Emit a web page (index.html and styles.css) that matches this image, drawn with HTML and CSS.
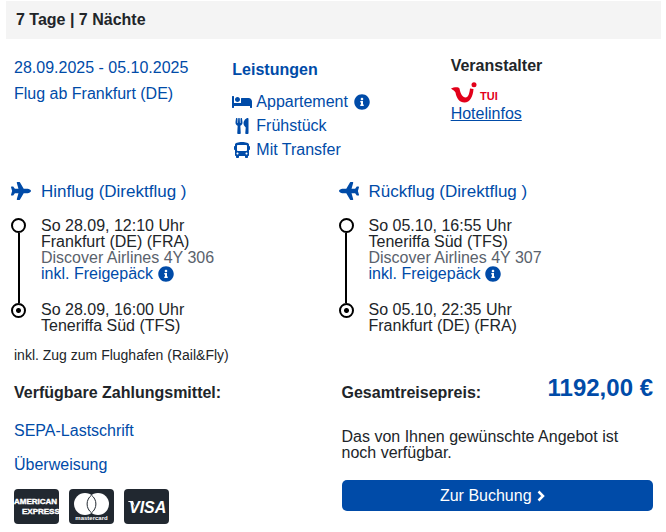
FILE: index.html
```html
<!DOCTYPE html>
<html lang="de">
<head>
    <meta charset="UTF-8">
    <meta name="viewport" content="width=device-width, initial-scale=1.0">
    <title>Reiseangebot</title>
    <link rel="stylesheet" href="styles.css">
</head>
<body>

<!-- icons -->
<svg class="sprite" aria-hidden="true">
    <symbol id="info" viewBox="0 0 512 512"><path d="M256 8C119.043 8 8 119.083 8 256c0 136.997 111.043 248 248 248s248-111.003 248-248C504 119.083 392.957 8 256 8zm0 110c23.196 0 42 18.804 42 42s-18.804 42-42 42-42-18.804-42-42 18.804-42 42-42zm56 254c0 6.627-5.373 12-12 12h-88c-6.627 0-12-5.373-12-12v-24c0-6.627 5.373-12 12-12h12v-64h-12c-6.627 0-12-5.373-12-12v-24c0-6.627 5.373-12 12-12h64c6.627 0 12 5.373 12 12v100h12c6.627 0 12 5.373 12 12v24z"/></symbol>
    <symbol id="bed" viewBox="0 0 640 512"><path d="M176 256c44.11 0 80-35.89 80-80s-35.89-80-80-80-80 35.89-80 80 35.89 80 80 80zm352-128H304c-8.84 0-16 7.16-16 16v144H64V80c0-8.84-7.16-16-16-16H16C7.16 64 0 71.16 0 80v352c0 8.84 7.16 16 16 16h32c8.84 0 16-7.16 16-16v-48h512v48c0 8.84 7.16 16 16 16h32c8.84 0 16-7.16 16-16V240c0-61.86-50.14-112-112-112z"/></symbol>
    <symbol id="utensils" viewBox="0 0 416 512"><path d="M207.9 15.2c.8 4.7 16.1 94.5 16.1 128.8 0 52.3-27.8 89.6-68.9 104.6L168 486.7c.7 13.7-10.2 25.3-24 25.3H80c-13.7 0-24.7-11.5-24-25.3l12.9-238.1C27.7 233.6 0 196.2 0 144 0 109.6 15.3 19.9 16.1 15.2 19.3-5.1 61.4-5.4 64 16.3v141.2c1.3 3.4 15.1 3.2 16 0 1.4-25.3 7.9-139.2 8-141.8 3.3-20.8 44.7-20.8 47.9 0 .2 2.7 6.6 116.5 8 141.8.9 3.2 14.8 3.4 16 0V16.3c2.6-21.6 44.8-21.4 47.9-1.1zm119.2 285.7l-15 185.1c-1.2 14 9.9 26 23.9 26h56c13.3 0 24-10.7 24-24V24c0-13.2-10.7-24-24-24-82.5 0-221.4 178.5-64.9 300.9z"/></symbol>
    <symbol id="bus" viewBox="0 0 512 512"><path d="M488 128h-8V80c0-44.8-99.2-80-224-80S32 35.2 32 80v48h-8c-13.25 0-24 10.74-24 24v80c0 13.25 10.75 24 24 24h8v160c0 17.67 14.33 32 32 32v32c0 17.67 14.33 32 32 32h32c17.67 0 32-14.33 32-32v-32h192v32c0 17.67 14.33 32 32 32h32c17.67 0 32-14.33 32-32v-32h6.4c16 0 25.6-12.8 25.6-25.6V256h8c13.25 0 24-10.75 24-24v-80c0-13.26-10.75-24-24-24zM112 400c-17.67 0-32-14.33-32-32s14.33-32 32-32 32 14.33 32 32-14.33 32-32 32zm16-112c-17.67 0-32-14.33-32-32V128c0-17.67 14.33-32 32-32h256c17.67 0 32 14.33 32 32v128c0 17.67-14.33 32-32 32H128zm272 112c-17.67 0-32-14.33-32-32s14.33-32 32-32 32 14.33 32 32-14.33 32-32 32z"/></symbol>
    <symbol id="plane" viewBox="0 0 576 512"><path d="M480 192H365.71L260.61 8.06A16.014 16.014 0 0 0 246.71 0h-65.5c-10.63 0-18.3 10.17-15.38 20.39L214.86 192H112l-43.2-57.6c-3.02-4.03-7.77-6.4-12.8-6.4H16.01C5.6 128-2.04 137.78.49 147.88L32 256 .49 364.12C-2.04 374.22 5.6 384 16.01 384H56c5.04 0 9.78-2.37 12.8-6.4L112 320h102.86l-49.03 171.6c-2.92 10.22 4.75 20.4 15.38 20.4h65.5c5.74 0 11.04-3.08 13.89-8.06L365.71 320H480c35.35 0 96-28.65 96-64s-60.65-64-96-64z"/></symbol>
</svg>

<main class="offer">
    <h1 class="offerHeader">7 Tage | 7 Nächte</h1>

    <section class="summary">
        <div class="travelDates">
            <div>28.09.2025 - 05.10.2025</div>
            <div>Flug ab Frankfurt (DE)</div>
        </div>
        <div class="services">
            <h2>Leistungen</h2>
            <ul>
                <li><svg class="icon"><use href="#bed"/></svg>Appartement
                    <button class="infoButton" type="button" aria-label="Info"><svg><use href="#info"/></svg></button></li>
                <li><svg class="icon"><use href="#utensils"/></svg>Frühstück</li>
                <li><svg class="icon"><use href="#bus"/></svg>Mit Transfer</li>
            </ul>
        </div>
        <div class="operator">
            <h2>Veranstalter</h2>
            <svg class="tuiLogo" viewBox="0 0 50 22">
                <path d="M0 6.500C3 5 7.500 4.500 8.500 6.500C9.500 12 11.500 15.500 14.500 15.500C17.500 15.500 18.500 11 19 6.500L22.500 7C22 14.500 19 20.500 13.500 20.500C8.500 20.500 5.500 16.500 4.500 10.500C3.500 8.500 1.500 8 0 6.500Z"/>
                <circle cx="23" cy="2.700" r="2.500"/>
                <text x="29" y="18">TUI</text>
            </svg>
            <a href="#">Hotelinfos</a>
        </div>
    </section>

    <section class="flights">
        <div class="flight">
            <svg class="plane"><use href="#plane"/></svg>
            <h3>Hinflug (Direktflug )</h3>
            <div class="route">
                <span class="stop"></span>
                <span class="line"></span>
                <span class="stop final"></span>
            </div>
            <div class="stops">
                <div>
                    <div>So 28.09, 12:10 Uhr</div>
                    <div>Frankfurt (DE) (FRA)</div>
                    <div class="airline">Discover Airlines 4Y 306</div>
                    <div class="baggage">inkl. Freigepäck <button class="infoButton" type="button" aria-label="Info"><svg><use href="#info"/></svg></button></div>
                </div>
                <div>
                    <div>So 28.09, 16:00 Uhr</div>
                    <div>Teneriffa Süd (TFS)</div>
                </div>
            </div>
        </div>
        <div class="flight">
            <svg class="plane back"><use href="#plane"/></svg>
            <h3>Rückflug (Direktflug )</h3>
            <div class="route">
                <span class="stop"></span>
                <span class="line"></span>
                <span class="stop final"></span>
            </div>
            <div class="stops">
                <div>
                    <div>So 05.10, 16:55 Uhr</div>
                    <div>Teneriffa Süd (TFS)</div>
                    <div class="airline">Discover Airlines 4Y 307</div>
                    <div class="baggage">inkl. Freigepäck <button class="infoButton" type="button" aria-label="Info"><svg><use href="#info"/></svg></button></div>
                </div>
                <div>
                    <div>So 05.10, 22:35 Uhr</div>
                    <div>Frankfurt (DE) (FRA)</div>
                </div>
            </div>
        </div>
    </section>

    <p class="railNote">inkl. Zug zum Flughafen (Rail&amp;Fly)</p>

    <section class="checkout">
        <div class="payment">
            <h4>Verfügbare Zahlungsmittel:</h4>
            <ul>
                <li>SEPA-Lastschrift</li>
                <li>Überweisung</li>
            </ul>
            <div class="cards">
                <svg viewBox="0 0 45 35" role="img" aria-label="American Express">
                    <rect width="45" height="35" rx="4"/>
                    <text class="amex" x="0" y="15">AMERICAN</text>
                    <text class="amex" x="8" y="25">EXPRESS</text>
                </svg>
                <svg viewBox="0 0 45 35" role="img" aria-label="Mastercard">
                    <rect width="45" height="35" rx="4"/>
                    <circle class="disc" cx="16" cy="15" r="11"/>
                    <circle class="disc" cx="29" cy="15" r="11"/>
                    <path class="overlap" d="M22.500 6.200a11 11 0 0 1 0 17.600a11 11 0 0 1 0-17.600z"/>
                    <text class="mastercard" x="22.500" y="31">mastercard</text>
                </svg>
                <svg viewBox="0 0 45 35" role="img" aria-label="Visa">
                    <rect width="45" height="35" rx="4"/>
                    <path class="flag" d="M4 12h5l2 6c-1-3-4-5-7-5.500z"/>
                    <text class="visa" x="5" y="24">VISA</text>
                </svg>
            </div>
        </div>
        <div class="booking">
            <div class="total">
                <h4>Gesamtreisepreis:</h4>
                <strong class="price">1192,00 €</strong>
            </div>
            <p>Das von Ihnen gewünschte Angebot ist noch verfügbar.</p>
            <button class="bookButton" type="button">Zur Buchung
                <svg viewBox="0 0 8 12"><path d="M1.500 1.500L6 6L1.500 10.500"/></svg>
            </button>
        </div>
    </section>
</main>

</body>
</html>
```
FILE: styles.css
```css
body {
    font-family: "Liberation Sans", Arial, sans-serif;
    font-size: 16px;
    line-height: 16px;
    background-color: #fff;
    color: #212529;
    margin: 0;
}

h1, h2, h3, h4, p, ul {
    margin: 0;
    padding: 0;
    font-size: 16px;
}

ul {
    list-style-type: none;
}

svg {
    display: block;
}

.sprite {
    display: none;
}

.offer {
    padding: 1px 5px 0 6px;
}

.offerHeader {
    padding: 0 10px;
    line-height: 38px;
    background-color: #f4f4f4;
}

.summary {
    display: grid;
    grid-template-columns: repeat(3, 1fr);
    padding-top: 16px;
    line-height: 24px;
}

.summary > div {
    padding: 0 8px;
}

.travelDates, .services {
    color: #004ba8;
}

.summary .travelDates {
    line-height: 26px;
}

.services {
    margin-top: 3px;
}

.services h2 {
    margin-bottom: 8px;
}

.services li {
    display: flex;
    align-items: center;
}

.icon {
    width: 20px;
    height: 16px;
    margin-right: 4px;
    fill: #004ba8;
}

.infoButton {
    width: 16px;
    height: 16px;
    padding: 0;
    border: 0;
    background: none;
    vertical-align: top;
    cursor: pointer;
}

.infoButton svg {
    width: 16px;
    height: 16px;
    fill: #004ba8;
}

.services .infoButton {
    margin-left: 6px;
}

.operator h2 {
    line-height: 22px;
}

.tuiLogo {
    width: 50px;
    height: 22px;
    margin-top: 5px;
    fill: #e2001a;
}

.tuiLogo text {
    font-size: 11px;
    font-weight: bold;
}

.operator a {
    display: block;
    line-height: 20px;
    color: #004ba8;
}

.flights {
    display: grid;
    grid-template-columns: 1fr 1fr;
    padding-top: 20px;
}

.flight {
    display: grid;
    grid-template-columns: 20px 1fr;
    column-gap: 10px;
    row-gap: 16px;
    padding: 0 5px;
}

.flight h3 {
    font-size: 17px;
    font-weight: normal;
    line-height: 20px;
    color: #004ba8;
}

.plane {
    width: 20px;
    height: 18px;
    fill: #004ba8;
}

.plane.back {
    transform: scaleX(-1);
}

.route {
    display: flex;
    flex-direction: column;
    align-items: center;
    width: 15px;
    padding-bottom: 16px;
}

.stop {
    box-sizing: border-box;
    width: 15px;
    height: 15px;
    border: 2px solid #000;
    border-radius: 50%;
}

.stop.final {
    background: radial-gradient(circle, #000 2px, #fff 3px);
}

.line {
    flex: 1;
    width: 2px;
    background-color: #000;
}

.stops {
    display: grid;
    row-gap: 20px;
}

.airline {
    color: #5a626c;
}

.baggage {
    color: #004ba8;
}

.railNote {
    padding: 13px 8px 0;
    font-size: 14px;
}

.checkout {
    display: grid;
    grid-template-columns: 1fr 1fr;
    padding-top: 13px;
}

.payment, .booking {
    padding: 0 8px;
}

.payment h4, .total {
    line-height: 34px;
}

.payment li {
    padding-bottom: 18px;
    color: #004ba8;
}

.payment ul {
    padding-top: 13px;
}

.cards {
    display: flex;
    gap: 10px;
    margin-top: -2px;
}

.cards svg {
    width: 45px;
    height: 35px;
    overflow: hidden;
    fill: #212830;
}

.cards text, .cards .disc, .cards .flag {
    fill: #fff;
}

.cards .overlap {
    stroke: #212830;
    fill: #fff;
}

.amex {
    font-size: 8px;
    font-weight: bold;
    stroke: #fff;
    stroke-width: 0.4;
}

.mastercard {
    font-size: 6px;
    font-weight: bold;
    text-anchor: middle;
}

.visa {
    font-size: 16px;
    font-weight: bold;
    font-style: italic;
}

.total {
    display: flex;
    justify-content: space-between;
}

.price {
    font-size: 24px;
    line-height: 24px;
    color: #004ba8;
}

.booking p {
    padding: 19px 0;
}

.bookButton {
    display: flex;
    align-items: center;
    justify-content: center;
    gap: 5px;
    width: 100%;
    height: 31px;
    padding: 0 16px 0 6px;
    border: 0;
    border-radius: 5px;
    background-color: #004ba8;
    color: #fff;
    font-family: inherit;
    font-size: 16px;
    cursor: pointer;
}

.bookButton svg {
    width: 8px;
    height: 12px;
    fill: none;
    stroke: #fff;
    stroke-width: 2.5;
}
```
